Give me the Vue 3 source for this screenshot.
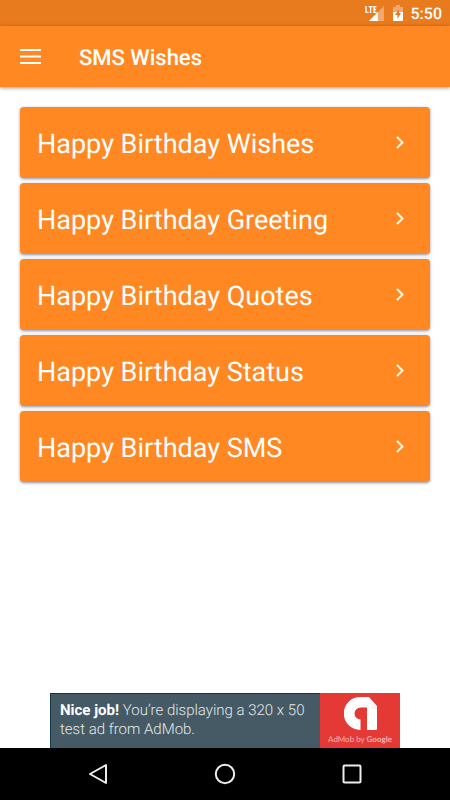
<template>
  <div class="screen">
    <div class="status-bar">
      <svg class="signal" viewBox="0 0 20 17" role="img" aria-label="LTE signal">
        <path class="faint" d="M19 1v15H4z" />
        <path d="M13 7v9H4z" />
        <path class="lte" d="M1 1v6.400h2.600M3.600 1.600h4M5.600 1.600V8M11.500 1.600H9v5.800h2.500M9 4.500h2.200" />
      </svg>
      <svg class="battery" viewBox="0 0 10 16" role="img" aria-label="Battery charging">
        <path class="faint" d="M0 2h3V0h4v2h3v6H0z" />
        <path d="M0 7h10v8a1 1 0 0 1-1 1H1a1 1 0 0 1-1-1z" />
        <path class="bolt" d="M6 4L2 10h2.4v4L8 8H6z" />
      </svg>
      <span class="clock">5:50</span>
    </div>

    <header class="toolbar">
      <button class="menu-btn" type="button" aria-label="Open menu">
        <svg viewBox="0 0 21 15">
          <path d="M0 1h21M0 7.5h21M0 14h21" />
        </svg>
      </button>
      <h1 class="title">SMS Wishes</h1>
    </header>

    <main class="content">
      <button
        v-for="category in categories"
        :key="category"
        class="card"
        type="button"
      >
        <span class="card-label">{{ category }}</span>
        <svg class="chevron" viewBox="0 0 8 13">
          <path d="M1 1l5.5 5.5L1 12" />
        </svg>
      </button>
    </main>

    <a class="ad" href="#">
      <span class="ad-text">
        <span class="ad-line"><b>Nice job!</b> <span>You’re displaying a 320 x 50</span></span>
        <span class="ad-line">test ad from AdMob.</span>
      </span>
      <span class="ad-brand">
        <svg viewBox="0 0 33 33">
          <path class="logo-base" d="M16 0h9l8 9v23a1 1 0 0 1-1 1h-9V10.5h-6.500a6 6 0 0 0 0 12V33A16.500 16.500 0 0 1 16 0z" />
          <path class="logo-fold" d="M23 10.500h10V12z" />
        </svg>
        <span class="ad-label">AdMob by <b>Google</b></span>
      </span>
    </a>

    <nav class="nav-bar">
      <button type="button" aria-label="Back">
        <svg viewBox="0 0 22 22"><path d="M19 2v18L3 11z" /></svg>
      </button>
      <button type="button" aria-label="Home">
        <svg viewBox="0 0 22 22"><circle cx="11" cy="11" r="9.2" /></svg>
      </button>
      <button type="button" aria-label="Recent apps">
        <svg viewBox="0 0 22 22"><rect x="2.5" y="2.5" width="17" height="17" rx="1" /></svg>
      </button>
    </nav>
  </div>
</template>

<script setup>
import { ref } from 'vue';

const categories = ref([
  'Happy Birthday Wishes',
  'Happy Birthday Greeting',
  'Happy Birthday Quotes',
  'Happy Birthday Status',
  'Happy Birthday SMS'
]);
</script>

<style>
body {
  margin: 0;
  background: #fff;
}
</style>

<style scoped>
.screen {
  display: flex;
  flex-direction: column;
  min-height: 100vh;
  font-family: Roboto, sans-serif;
  text-rendering: geometricPrecision;
  color: #fff;
}

button {
  border: none;
  padding: 0;
  background: none;
  color: inherit;
  font-family: inherit;
  text-rendering: inherit;
  cursor: pointer;
}

svg {
  display: block;
  fill: none;
}

.status-bar {
  display: flex;
  align-items: center;
  justify-content: flex-end;
  height: 26px;
  padding-right: 8px;
  background: #e87b1e;
}

.signal {
  width: 20px;
  height: 17px;
  margin-right: 8px;
}

.battery {
  width: 10px;
  height: 16px;
  margin-right: 8px;
}

.signal path,
.battery path {
  fill: #fff;
}

.signal .faint,
.battery .faint {
  fill: #f1a973;
}

.signal .lte {
  fill: none;
  stroke: #fff;
  stroke-width: 1.4;
}

.battery .bolt {
  fill: #e87b1e;
}

.clock {
  padding-top: 2px;
  font-size: 16px;
  font-weight: 500;
  line-height: 24px;
}

.toolbar {
  display: flex;
  align-items: center;
  height: 61px;
  padding: 0 20px;
  background: #ff8822;
  box-shadow: 0 1px 4px rgba(0, 0, 0, 0.4);
}

.menu-btn svg {
  width: 21px;
  height: 15px;
  stroke: #fff;
  stroke-width: 2;
}

.title {
  margin: 0 0 0 38px;
  padding-top: 4px;
  font-size: 22px;
  font-weight: 500;
  line-height: 28px;
}

.content {
  display: flex;
  flex: 1;
  flex-direction: column;
  gap: 5px;
  padding: 20px;
}

.card {
  display: flex;
  align-items: center;
  justify-content: space-between;
  height: 71px;
  padding: 0 26px 0 17px;
  border-radius: 4px;
  background: #ff8822;
  box-shadow: 0 1px 3px rgba(30, 40, 70, 0.5);
  font-size: 27px;
  line-height: 36px;
  text-align: left;
}

.card-label {
  padding-top: 2px;
}

.chevron {
  width: 8px;
  height: 13px;
  stroke: #fff;
  stroke-width: 2;
}

.ad {
  display: flex;
  align-self: center;
  box-sizing: border-box;
  width: 350px;
  max-width: 100%;
  height: 55px;
  border-top: 1px solid #12364a;
  border-left: 1px solid #12364a;
  background: #455a64;
  color: #e4e9eb;
  text-decoration: none;
}

.ad-text {
  flex: 1;
  padding: 7px 0 0 9px;
  font-size: 15px;
  font-weight: 300;
  line-height: 19px;
}

.ad-line {
  display: block;
}

.ad-text b {
  color: #fff;
  font-weight: 700;
}

.ad-brand {
  display: flex;
  flex-direction: column;
  align-items: center;
  width: 80px;
  margin-top: -1px;
  padding-top: 4px;
  background: #e53935;
}

.ad-brand svg {
  width: 33px;
  height: 33px;
}

.logo-base {
  fill: #fff;
}

.logo-fold {
  fill: #e6e6e6;
}

.ad-label {
  margin-top: 3px;
  color: #f9b5b3;
  font-family: Lato, sans-serif;
  font-size: 8px;
  line-height: 12px;
}

.ad-label b {
  font-weight: 700;
}

.nav-bar {
  display: flex;
  align-items: center;
  justify-content: center;
  gap: 105px;
  height: 52px;
  background: #000;
}

.nav-bar svg {
  width: 22px;
  height: 22px;
  stroke: #eee;
  stroke-width: 2;
  stroke-linejoin: round;
}
</style>
